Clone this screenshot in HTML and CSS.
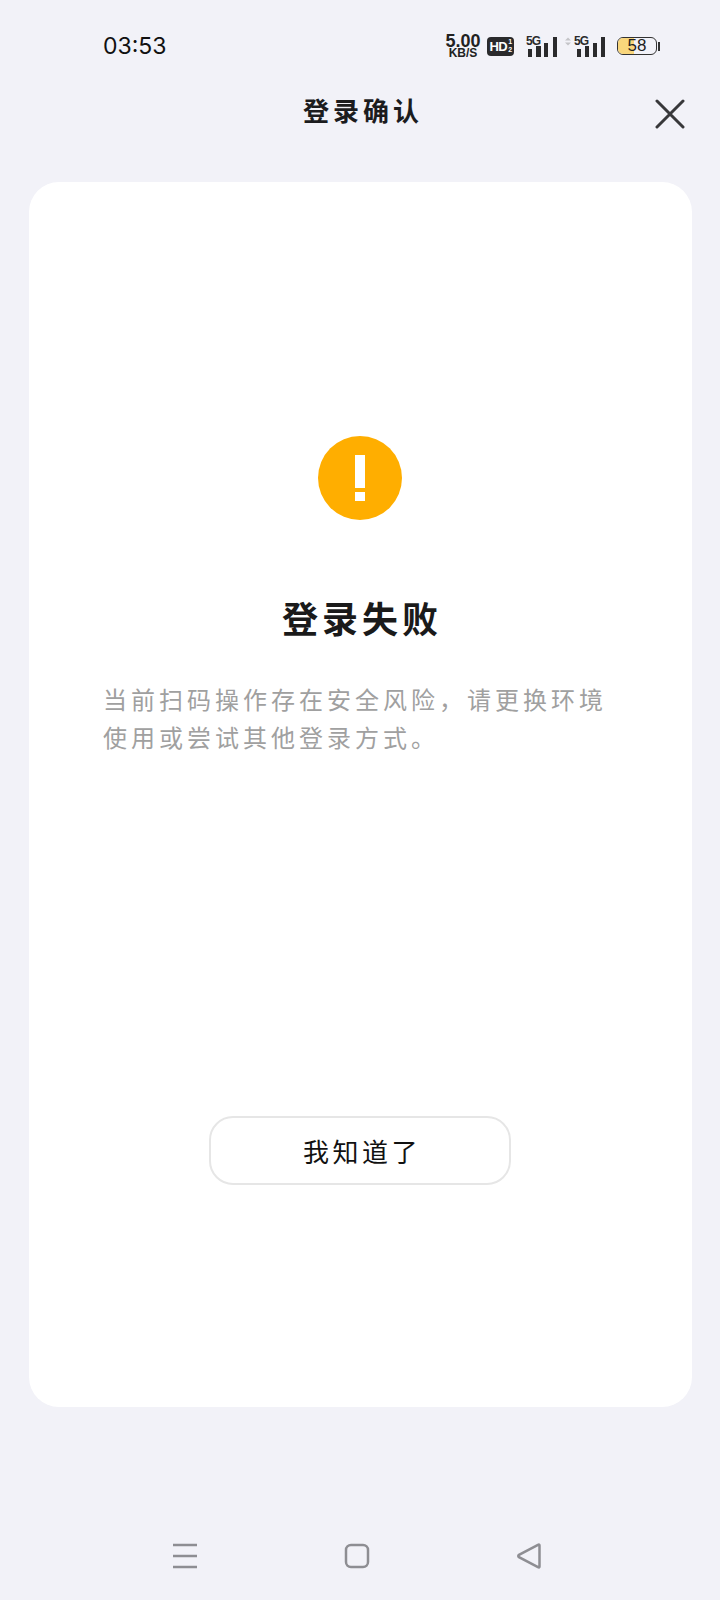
FILE: index.html
```html
<!DOCTYPE html>
<html lang="zh-CN">
<head>
    <meta charset="UTF-8">
    <title>登录确认</title>
    <link rel="stylesheet" href="styles.css">
</head>
<body>

    <div class="status-bar">
        <div class="time">03:53</div>
        <div class="status-icons">
            <div class="net-speed">
                <span class="speed-value">5.00</span>
                <span class="speed-unit">KB/S</span>
            </div>
            <div class="hd-badge">HD<span class="hd-sim"><span>1</span><span>2</span></span></div>
            <svg class="signal" width="31" height="24" viewBox="0 0 31 24">
                <text x="0" y="11" class="signal-label" textLength="15">5G</text>
                <rect x="2" y="15" width="4" height="8"/>
                <rect x="10" y="12" width="5" height="11"/>
                <rect x="18" y="9" width="4" height="14"/>
                <rect x="27" y="3" width="4" height="20"/>
            </svg>
            <svg class="signal signal-two" width="40" height="24" viewBox="0 0 40 24">
                <path class="data-arrows" d="M0 6.500 L3 3.500 L6 6.500 Z M0 8.500 L3 11.500 L6 8.500 Z"/>
                <text x="9" y="11" class="signal-label" textLength="15">5G</text>
                <rect x="12" y="15" width="4" height="8"/>
                <rect x="20" y="12" width="4" height="11"/>
                <rect x="28" y="9" width="4" height="14"/>
                <rect x="36" y="3" width="4" height="20"/>
            </svg>
            <div class="battery">
                <div class="battery-body">
                    <div class="battery-fill" style="width: 42%"></div>
                    <span class="battery-level">58</span>
                </div>
                <div class="battery-cap"></div>
            </div>
        </div>
    </div>

    <div class="header">
        <h1 class="page-title">登录确认</h1>
        <svg class="close-icon" width="30" height="30" viewBox="0 0 30 30">
            <path d="M2 2 L28 28 M28 2 L2 28"/>
        </svg>
    </div>

    <div class="card">
        <svg class="alert-icon" width="84" height="84" viewBox="0 0 84 84">
            <circle cx="42" cy="42" r="42"/>
            <rect x="37" y="19" width="10" height="33"/>
            <rect x="37" y="56" width="10" height="9"/>
        </svg>
        <h2 class="result-title">登录失败</h2>
        <p class="result-text">当前扫码操作存在安全风险，请更换环境<br>使用或尝试其他登录方式。</p>
        <button class="ok-button">我知道了</button>
    </div>

    <div class="nav-bar">
        <svg class="nav-icon" width="26" height="26" viewBox="0 0 26 26">
            <path d="M1 2 H25 M1 13 H25 M1 24 H25"/>
        </svg>
        <svg class="nav-icon" width="26" height="26" viewBox="0 0 26 26">
            <rect x="2" y="2" width="22" height="22" rx="5"/>
        </svg>
        <svg class="nav-icon" width="26" height="26" viewBox="0 0 26 26">
            <path d="M23.500 2.500 V23.500 Q23.500 25 22 24.200 L3 14.200 Q1.500 13 3 11.800 L22 1.800 Q23.500 1 23.500 2.500 Z"/>
        </svg>
    </div>

</body>
</html>
```

FILE: styles.css
```css
html, body {
    margin: 0;
    padding: 0;
}

body {
    width: 720px;
    height: 1600px;
    overflow: hidden;
    background-color: #f2f2f8;
    color: #1a1a1a;
    font-family: "Noto Sans CJK SC", "Noto Sans", sans-serif;
}

/* status bar */
.status-bar {
    height: 76px;
    margin-top: 8px;
    display: flex;
    justify-content: space-between;
    align-items: center;
    padding: 0 60px 0 103px;
}

.time {
    font-family: Inter, sans-serif;
    font-size: 23px;
    color: #111;
}

.status-icons {
    display: flex;
    align-items: center;
}

.net-speed {
    display: flex;
    flex-direction: column;
    align-items: center;
    width: 36px;
    font-family: "Liberation Sans", sans-serif;
    font-weight: bold;
    color: #222;
}

.speed-value {
    font-size: 18px;
    line-height: 14px;
}

.speed-unit {
    font-size: 12px;
    line-height: 11px;
}

.hd-badge {
    display: flex;
    align-items: center;
    justify-content: center;
    width: 27px;
    height: 19px;
    margin-left: 6px;
    border-radius: 4px;
    background-color: #2a2a2c;
    color: #fff;
    font-family: "Liberation Sans", sans-serif;
    font-size: 13px;
    font-weight: bold;
    letter-spacing: -0.5px;
}

.hd-sim {
    display: flex;
    flex-direction: column;
    font-size: 7px;
    line-height: 8px;
    margin-left: 1px;
}

.signal {
    margin-left: 12px;
    fill: #2a2a2c;
}

.signal-two {
    margin-left: 8px;
}

.signal-label {
    font-family: "Liberation Sans", sans-serif;
    font-size: 12px;
    font-weight: bold;
}

.data-arrows {
    fill: #c4c4c8;
}

.battery {
    display: flex;
    align-items: center;
    margin-left: 12px;
}

.battery-body {
    position: relative;
    width: 38px;
    height: 16px;
    border: 1.500px solid #333;
    border-radius: 6px;
    overflow: hidden;
}

.battery-fill {
    height: 100%;
    background-color: #f9d67c;
}

.battery-level {
    position: absolute;
    top: 0;
    left: 0;
    width: 100%;
    text-align: center;
    font-family: "Liberation Sans", sans-serif;
    font-size: 17px;
    line-height: 16px;
    color: #222;
}

.battery-cap {
    width: 2px;
    height: 9px;
    margin-left: 1px;
    background-color: #333;
}

/* header */
.header {
    height: 52px;
    display: grid;
    grid-template-columns: 1fr auto 1fr;
    align-items: center;
}

.page-title {
    grid-column: 2;
    margin: 0;
    padding-left: 6px;
    font-size: 26px;
    font-weight: bold;
    letter-spacing: 4px;
    line-height: 52px;
    color: #1c1c1e;
}

.close-icon {
    justify-self: end;
    margin: 8px 35px 0 0;
    fill: none;
    stroke: #38383a;
    stroke-width: 3;
    stroke-linecap: round;
}

/* card */
.card {
    height: 1225px;
    margin: 46px 28.500px 0;
    padding-top: 254px;
    box-sizing: border-box;
    display: flex;
    flex-direction: column;
    align-items: center;
    background-color: #fff;
    border-radius: 30px;
}

.alert-icon {
    flex-shrink: 0;
    fill: #fff;
}

.alert-icon circle {
    fill: #ffae00;
}

.result-title {
    margin: 71px 0 0;
    padding-left: 4px;
    font-size: 36px;
    font-weight: bold;
    letter-spacing: 4px;
    line-height: 52px;
    color: #1a1a1a;
}

.result-text {
    align-self: stretch;
    margin: 37px 0 0;
    padding: 0 30px 0 74.500px;
    font-size: 24px;
    letter-spacing: 4px;
    line-height: 38px;
    color: #a0a0a0;
}

.ok-button {
    width: 302px;
    height: 69px;
    margin-top: 360px;
    padding: 0 0 0 4px;
    background-color: #fff;
    border: 2px solid #e6e6e6;
    border-radius: 24px;
    font-family: inherit;
    font-size: 26px;
    letter-spacing: 3.500px;
    color: #111;
}

/* bottom nav */
.nav-bar {
    margin-top: 136px;
    display: flex;
    justify-content: center;
    gap: 146px;
    padding-right: 7px;
}

.nav-icon {
    fill: none;
    stroke: #8e8e93;
    stroke-width: 2.500;
}
```
